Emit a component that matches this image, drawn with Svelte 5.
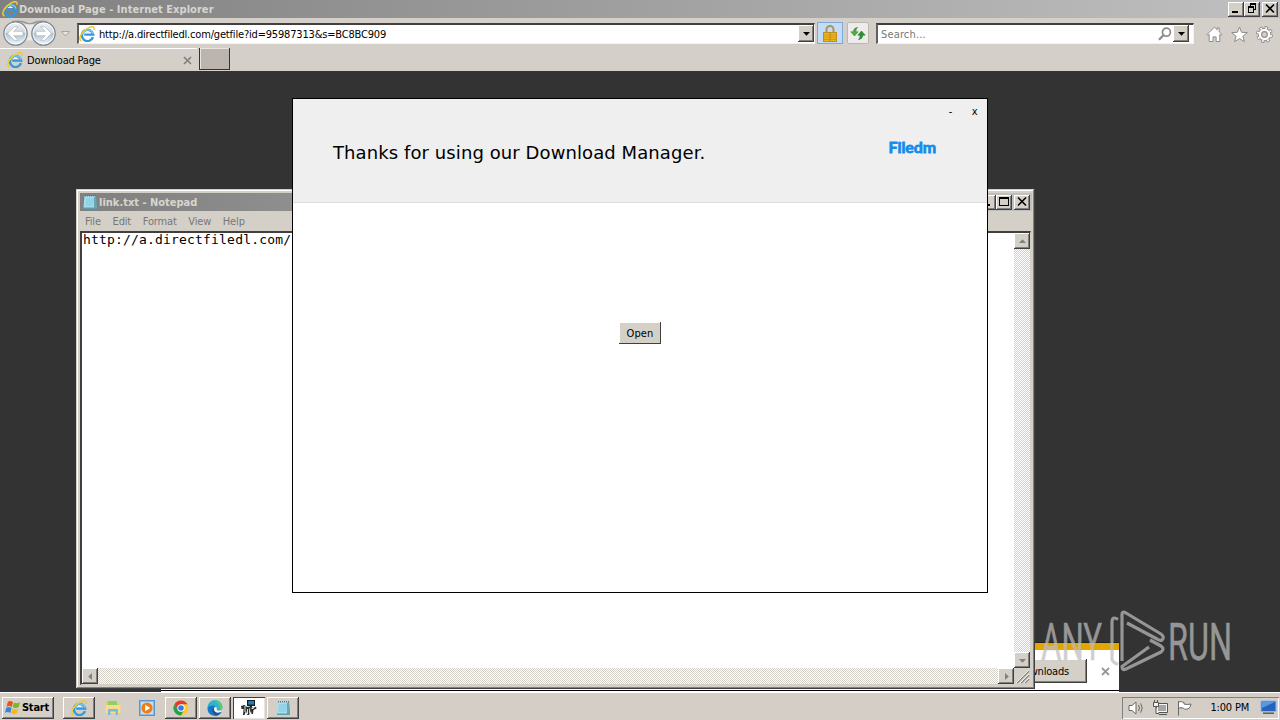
<script>
let address = $state('http://a.directfiledl.com/getfile?id=95987313&s=BC8BC909');
let query = $state('');
let note = $state('http://a.directfiledl.com/');

const menus = ['File', 'Edit', 'Format', 'View', 'Help'];
const tasks = [
	{ icon: 'ie', kind: 'running' },
	{ icon: 'folder', kind: 'pinned' },
	{ icon: 'player', kind: 'pinned' },
	{ icon: 'chrome', kind: 'running' },
	{ icon: 'edge', kind: 'running' },
	{ icon: 'setup', kind: 'active' },
	{ icon: 'notepad', kind: 'running' }
];
</script>

{#snippet arrow(dir, color = '#000')}
	<svg class="arrow" viewBox="0 0 7 7" width="7" height="7">
		{#if dir === 'down'}<path d="M0 2h7L3.5 5.8z" fill={color} />{/if}
		{#if dir === 'up'}<path d="M0 5h7L3.5 1.2z" fill={color} />{/if}
		{#if dir === 'left'}<path d="M5 0v7L1.2 3.5z" fill={color} />{/if}
		{#if dir === 'right'}<path d="M2 0v7L5.8 3.5z" fill={color} />{/if}
	</svg>
{/snippet}

{#snippet icon(name, size)}
	<svg class="icon" width={size} height={size} viewBox="0 0 16 16">
		{#if name === 'ie'}
			<path d="M14 11.2A5.7 5.6 0 1 1 14.2 8.6H5.2" fill="none" stroke="#3299dc" stroke-width="2.4" />
			<path d="M3.1 8A5.6 5.2 0 0 1 14 7.6" fill="none" stroke="#7acdf6" stroke-width="1.3" />
			<path d="M5.6 7q2.8-3.4 5.6 0z" fill="#e8f5fb" />
			<path d="M2.6 14.9C-1 14.2 1.2 7.8 6.4 3.8S15.8-.5 14.9 3.8" fill="none" stroke="#f0cb2c" stroke-width="1.5" />
		{:else if name === 'folder'}
			<path d="M1 2h5l1 1.500h7V12H1z" fill="#e9c95e" />
			<path d="M3 1h9v4H3z" fill="#8fcf6a" />
			<path d="M.5 5h15v8H.5z" fill="#f5dd8a" />
			<path d="M3 15V10q0-1 1-1h8q1 0 1 1v5h-2.400v-3.600H5.400V15z" fill="#7db9dc" />
		{:else if name === 'player'}
			<rect x=".5" y=".5" width="15" height="15" fill="#8bbbe5" stroke="#5996cf" />
			<path d="M2 2h12v12H2z" fill="#c4dff5" />
			<circle cx="8" cy="8" r="5.6" fill="#ee7d12" />
			<path d="M6.2 4.8v6.4L11.2 8z" fill="#fff" />
		{:else if name === 'chrome'}
			<circle cx="8" cy="8" r="7.5" fill="#fcc934" />
			<path d="M8 4.3h6.5A7.5 7.5 0 0 0 1.5 4.25L5 10z" fill="#e33b2e" />
			<path d="M1.5 4.25A7.5 7.5 0 0 0 8 15.5L11 10 8 11.5 5 10z" fill="#25a04b" />
			<circle cx="8" cy="8" r="3.7" fill="#fff" />
			<circle cx="8" cy="8" r="2.8" fill="#3779e5" />
		{:else if name === 'edge'}
			<path d="M.5 8A7.5 7.5 0 0 1 15.5 7c.2 4-4.5 4.5-6 3 1-1 .7-3-1.5-3.6C4.6 5.3 2 6 .5 8z" fill="#2bb5d2" />
			<path d="M7 .6A7.5 7.5 0 0 1 15.5 7c0 2-1.5 3.2-3.2 3.4C14 6 11 3 7 .6z" fill="#5ccb62" />
			<path d="M.5 8C2.2 4.8 7.6 5 8.8 7 6 7.4 5.7 11 8.5 12.4c2 1 4.2.7 6-.3A7.5 7.5 0 0 1 .5 8z" fill="#1977c9" />
			<path d="M5.3 8.4C4.6 12 7 15 10 15.2c2-.5 3.6-1.6 4.5-3.1-4 1.8-7.8.2-7.2-3.7z" fill="#155799" />
			<path d="M8.9 7.2Q10 8.5 9.4 10q1.2 1.3 5 .5l-.5 1.2q-3.6 1.3-5.6-.2-2-2-.7-4z" fill="#eef5f5" />
		{:else if name === 'setup'}
			<path d="M6 0h8v6H6z" fill="#161c22" />
			<path d="M7.2 1H13v3.6H7.2z" fill="#1682c5" />
			<path d="M9 6h2v1.5H9z" fill="#222" />
			<path d="M0 6l3.5-1L6 7l3-.5L12.5 8 15 6.5l.5 2-3 1.5-.5 4h-1.5l-.5-3-2 4H6.4L5 11l-1.5 4H2l.5-6H.5z" fill="#29302f" />
			<path d="M4 6v6M6.5 9v5M8.6 8.5v5M10.5 8.5h2" stroke="#dce5e7" fill="none" />
		{:else if name === 'notepad'}
			<path d="M3 2h11l1 13H2z" fill="#5e9dab" />
			<path d="M2.5 2h11v11.5h-12z" fill="#a4dff0" />
			<path d="M4 5h8M4 7h8M3.5 9h8M3.3 11h8" stroke="#74bdd4" stroke-width=".7" />
			<path d="M12 3l2-.5 1 12-3-.5z" fill="#6ba5b2" />
			<path d="M3 1.7h11" stroke="#557d89" stroke-width="1.6" stroke-dasharray="1 1" />
		{/if}
	</svg>
{/snippet}

{#snippet caption(kind)}
	<button class="cap raised" aria-label={kind}>
		<svg width="12" height="11" viewBox="0 0 12 11" fill="none" stroke="#000" shape-rendering="crispEdges">
			{#if kind === 'minimize'}<path d="M2 9h6" stroke-width="2" />{/if}
			{#if kind === 'maximize'}<path d="M1.5 1.5h9v8h-9z" /><path d="M1 2h10" stroke-width="2" />{/if}
			{#if kind === 'restore'}<path d="M4.5 3V1.5h5v5H8M2.5 4.5h5v5h-5z" /><path d="M4 1h6M2 4h6" stroke-width="2" />{/if}
			{#if kind === 'close'}<path d="M2 1.5l8 8M10 1.5l-8 8" stroke-width="1.6" shape-rendering="auto" />{/if}
		</svg>
	</button>
{/snippet}

<div class="desktop">
	<div class="browser">
		<header class="titlebar">
			{@render icon('ie', 16)}
			<span class="title">Download Page - Internet Explorer</span>
			<div class="caps">
				{@render caption('minimize')}
				{@render caption('restore')}
				{@render caption('close')}
			</div>
		</header>

		<nav class="navbar">
			<svg class="history" width="73" height="28" viewBox="0 0 73 28">
				<defs>
					<linearGradient id="orb" x2="0" y2="1">
						<stop offset="0" stop-color="#f0f1f4" /><stop offset=".45" stop-color="#d5dbe1" />
						<stop offset=".5" stop-color="#b3c0cb" /><stop offset="1" stop-color="#eefaff" />
					</linearGradient>
				</defs>
				<path d="M12 2.8q9-1.6 16 1.8 2 .8 4 0 7-3.4 15-1.6" fill="none" stroke="#96989a" stroke-width="1.6" />
				<path d="M24 5.4h10v16H24z" fill="#eceae8" />
				{#each [15.5, 43.5] as cx}
					<circle {cx} cy="14.5" r="11.7" fill="url(#orb)" stroke="#7b8792" stroke-width="1.2" />
					<circle {cx} cy="14.5" r="10.4" fill="none" stroke="#fff" opacity=".7" />
				{/each}
				<path d="M7.5 14.5l7-6.8h3.8l-4.6 4.6H23v4.4h-9.3l4.6 4.6h-3.8z" fill="#fff" stroke="#a3afba" stroke-width=".6" />
				<path d="M51.5 14.5l-7-6.8h-3.8l4.6 4.6H36v4.4h9.3l-4.6 4.6h3.8z" fill="#fff" stroke="#a3afba" stroke-width=".6" />
				<path d="M61.5 12.5h8l-4 4.5z" fill="#e8e4df" stroke="#aaa59f" />
			</svg>
			<div class="field address">
				{@render icon('ie', 16)}
				<input class="url" aria-label="Address" bind:value={address} />
				<button class="drop raised" aria-label="Show address list">{@render arrow('down')}</button>
			</div>
			<button class="lock" aria-label="Security report">
				<svg width="14" height="17" viewBox="0 0 14 17">
					<path d="M3.5 8V4.5a3.5 3.5 0 0 1 7 0V8" fill="none" stroke="#a9955a" stroke-width="2" />
					<rect x=".5" y="7.5" width="13" height="9" fill="#efb51f" stroke="#c08d20" />
					<path d="M1 10h12M1 12.3h12M1 14.5h12" stroke="#d39a1a" />
					<path d="M7 8v8" stroke="#b98518" />
				</svg>
			</button>
			<button class="refresh" aria-label="Refresh">
				<svg width="16" height="15" viewBox="0 0 16 15">
					<path d="M4.5 10L.8 5.8h2.4Q3.5 2 7.5 1.3 5.8 3 5.9 5.8h2.3z" fill="#4aac43" stroke="#268027" stroke-width=".5" />
					<path d="M11.5 5l3.7 4.2h-2.4Q12.5 13 8.5 13.7q1.7-1.7 1.6-4.5H7.8z" fill="#289331" stroke="#197020" stroke-width=".5" />
				</svg>
			</button>
			<div class="field search">
				<input aria-label="Search" placeholder="Search..." bind:value={query} />
				<svg width="14" height="14" viewBox="0 0 14 14" fill="none" stroke="#8b8b8b">
					<circle cx="8.4" cy="5.2" r="4" stroke-width="1.7" /><path d="M5.4 8.3L1 12.7" stroke-width="2.3" />
				</svg>
				<button class="drop raised" aria-label="Search options">{@render arrow('down')}</button>
				<i></i>
			</div>
			<div class="tools">
				<svg width="17" height="17" viewBox="0 0 17 17" fill="#fff" stroke="#8f8c88">
					<path d="M.9 8.6l7.6-7.4 2.7 2.6V1.9h2v3.9l2.9 2.8-1 1-1.3-1.2v7.1h-3.7v-4.6H7v4.6H3.2V8.4L1.9 9.6z" />
				</svg>
				<svg width="17" height="17" viewBox="0 0 17 17" fill="#fff" stroke="#8f8c88">
					<path d="M8.5 1l2.1 5.3 5.7.3-4.4 3.6 1.5 5.5-4.9-3.1-4.9 3.1 1.5-5.5L.7 6.6l5.7-.3z" />
				</svg>
				<svg width="17" height="17" viewBox="0 0 17 17" fill="none">
					<circle cx="8.5" cy="8.5" r="6.7" stroke="#8f8c88" stroke-width="3.4" stroke-dasharray="3.2 2.06" />
					<circle cx="8.5" cy="8.5" r="4.5" stroke="#8f8c88" stroke-width="4.4" />
					<circle cx="8.5" cy="8.5" r="6.7" stroke="#fff" stroke-width="1.8" stroke-dasharray="1.8 3.46" stroke-dashoffset="-.7" />
					<circle cx="8.5" cy="8.5" r="4.6" stroke="#fff" stroke-width="2.4" />
				</svg>
			</div>
		</nav>

		<div class="tabs">
			<div class="tab">
				{@render icon('ie', 16)}
				<span class="tabname">Download Page</span>
				<svg width="9" height="9" viewBox="0 0 9 9"><path d="M1 1l7 7M8 1L1 8" stroke="#85807c" stroke-width="1.7" /></svg>
			</div>
			<button class="newtab" aria-label="New tab"></button>
		</div>
		<main class="page"></main>
	</div>

	<div class="notice">
		<div class="stripe"></div>
		<div class="noticebody">
			<button class="raised">View downloads</button>
			<svg width="9" height="9" viewBox="0 0 9 9"><path d="M1 1l7 7M8 1L1 8" stroke="#999" stroke-width="1.8" /></svg>
		</div>
	</div>

	<section class="notepad">
		<header class="titlebar">
			{@render icon('notepad', 16)}
			<span class="title">link.txt - Notepad</span>
			<div class="caps">
				{@render caption('minimize')}
				{@render caption('maximize')}
				{@render caption('close')}
			</div>
		</header>
		<div class="menubar">
			{#each menus as item}<span>{item}</span>{/each}
		</div>
		<div class="editor">
			<textarea aria-label="Text" spellcheck="false" bind:value={note}></textarea>
			<div class="scroll vertical">
				<button class="raised">{@render arrow('up', '#808080')}</button>
				<button class="raised">{@render arrow('down', '#808080')}</button>
			</div>
			<div class="scroll">
				<button class="raised">{@render arrow('left', '#808080')}</button>
				<button class="raised">{@render arrow('right', '#808080')}</button>
			</div>
			<svg class="grip" width="16" height="16" viewBox="0 0 16 16">
				<path d="M3 15L15 3M7 15l8-8M11 15l4-4" stroke="#858079" stroke-width="1.5" />
				<path d="M2 15L15 2M6 15l9-9M10 15l5-5" stroke="#fff" stroke-width=".8" />
			</svg>
		</div>
	</section>

	<section class="manager">
		<header>
			<div class="controls"><button>-</button><button>x</button></div>
			<div class="banner">
				<h1>Thanks for using our Download Manager.</h1>
				<strong>Filedm</strong>
			</div>
		</header>
		<div class="content"><button class="raised">Open</button></div>
	</section>

	<svg class="watermark" width="200" height="66" viewBox="0 0 200 66">
		<g fill="#bdbdbd" stroke="#bdbdbd" stroke-width=".5">
			<text x="1" y="51" textLength="61" lengthAdjust="spacingAndGlyphs">ANY</text>
			<text x="128" y="51" textLength="64" lengthAdjust="spacingAndGlyphs">RUN</text>
		</g>
		<g fill="none" stroke="#bdbdbd" stroke-width="3.2" stroke-linejoin="round">
			<path d="M78 10.5q-6-4-6 3V50q0 3 6 5.5" />
			<path d="M82 52V5q0-3 4-1l35 21q4 3 1 6-2 1-5-1L87 14" />
			<path d="M110 31l11 6q4 3 0 6L86 60q-4 2-4-2.5L109 38" />
		</g>
	</svg>

	<footer class="taskbar">
		<button class="start raised">
			<svg width="16" height="16" viewBox="0 0 15 15">
				<path d="M2.7 1.7Q5.3.2 7.5 2L6.4 6.6Q4 5 1.5 6.3z" fill="#e8531f" />
				<path d="M8.4 2.3q2.5 1.5 5.6-.1l-1.3 4.7q-3 1.4-5.4-.1z" fill="#78b72b" />
				<path d="M1.2 7.3q2.6-1.4 4.9.3L5 12.1Q2.5 10.6 0 12z" fill="#3387d4" />
				<path d="M7 8q2.5 1.4 5.3.1L11 12.7q-2.7 1.5-5.2-.2z" fill="#f3ba20" />
			</svg>
			Start
		</button>
		<div class="tasks">
			{#each tasks as task}
				<button class="task {task.kind}" class:raised={task.kind === 'running'} aria-label={task.icon}>
					{@render icon(task.icon, 16)}
				</button>
			{/each}
		</div>
		<div class="tray">
			<svg width="17" height="16" viewBox="0 0 17 16" fill="#fff" stroke="#696969">
				<path d="M1 5.5h3L8 2v12l-4-3.5H1z" /><path d="M10.5 5q2 3 0 6M12.7 3.3q3 4.7 0 9.4" fill="none" />
			</svg>
			<svg width="17" height="16" viewBox="0 0 17 16" fill="#f4f4f4" stroke="#555">
				<path d="M4.5 3.5h11v9h-11z" /><path d="M6 5h8v6H6z" fill="#a5a5a5" stroke="none" />
				<path d="M7 14.5h8M1.5 2.5h5v4h-5zM2.5 0v2.5M5.5 0v2.5M4 7v6.5h3" />
			</svg>
			<svg width="17" height="16" viewBox="0 0 17 16" fill="#fff" stroke="#696969">
				<path d="M2.5 1v14.5M2.5 2q3-1 5.5.5V4q3 1 7 0-1 5-4.5 5.2-2.5.1-3-1-2.5-1-5 0z" />
			</svg>
			<time>1:00 PM</time>
			<svg width="17" height="15" viewBox="0 0 17 15">
				<path d="M1 1h15v10.5H1z" fill="#2464bd" stroke="#8fb7e4" /><path d="M1.5 1.5h14L2 8z" fill="#5a9ae0" /><path d="M3 13.2h11" stroke="#555d66" stroke-width="1.5" />
			</svg>
		</div>
	</footer>
</div>

<style>
	:global(body) { margin: 0; overflow: hidden; }
	.desktop { position: relative; display: flex; flex-direction: column; width: 1280px; height: 720px; background: #333; font: 11px "DejaVu Sans Condensed", "DejaVu Sans", sans-serif; font-stretch: condensed; letter-spacing: -0.2px; color: #000; overflow: hidden; }
	.desktop * { box-sizing: border-box; }
	svg { display: block; flex: none; }
	button { display: flex; align-items: center; justify-content: center; padding: 0; border: 0; background: #d4d0c8; font: inherit; letter-spacing: inherit; color: #000; }
	input, textarea { min-width: 0; border: 0; padding: 0; outline: 0; background: none; font: inherit; letter-spacing: inherit; color: #000; }
	.raised { background: #d4d0c8; box-shadow: inset -1px -1px #404040, inset 1px 1px #fff, inset -2px -2px #808080; }
	.browser { display: flex; flex-direction: column; flex: 1; min-height: 0; background: #d5cfc9; }
	.titlebar { display: flex; align-items: center; height: 18px; padding: 0 2px; background: linear-gradient(90deg, #808080, #c0c0c0); font-weight: bold; color: #d8d5cf; }
	.title { margin-left: 1px; white-space: nowrap; letter-spacing: 0.05px; }
	.caps { display: flex; margin-left: auto; }
	.cap { width: 16px; height: 15px; padding: 0 1px 1px 0; }
	.cap:last-child { margin-left: 2px; }

	.navbar { display: flex; align-items: center; height: 30px; padding: 0 7px 0 0; }
	.history { margin-right: 4px; }
	.field { display: flex; align-items: center; height: 21px; background: #fff; border: solid; border-width: 2px 1px 1px 2px; border-color: #404040 #f4f2ee #f4f2ee #606060; }
	.address { width: 738px; }
	.url { flex: 1; margin-left: 4px; padding-top: 1px; letter-spacing: -0.18px; }
	.drop { width: 16px; height: 17px; }
	.lock { width: 26px; height: 22px; margin-left: 2px; background: #c5dcf7; border: 1px solid #7da9dc; }
	.refresh { width: 22px; height: 22px; margin-left: 4px; background: #eeecea; border: 1px solid #bcb7b1; border-radius: 2px; }
	.search { width: 318px; margin-left: 7px; padding-left: 3px; }
	.search input { flex: 1; padding-top: 1px; }
	.search input::placeholder { color: #777; opacity: 1; letter-spacing: 0.15px; }
	.search .drop { margin-left: 1px; }
	.search i { width: 4px; }
	.tools { display: flex; gap: 8px; margin: 3px 0 0 auto; }

	.tabs { display: flex; height: 23px; gap: 2px; }
	.tab { display: flex; align-items: center; width: 197px; padding: 0 5px 0 7px; border-top: 1px solid #fff; }
	.tabname { flex: 1; margin-left: 4px; }
	.newtab { width: 31px; height: 22px; background: #bcb4ae; border: solid #333; border-width: 0 1px 1px; box-shadow: inset 1px 1px #e8e4e0; }
	.page { flex: 1; background: #333; }

	.notice { position: absolute; left: 161px; top: 642px; width: 958px; height: 50px; background: #fff; border-top: 1px solid #222; box-shadow: inset 0 -1px #fff, inset 0 -2px #000; }
	.stripe { height: 7px; background: #e3a600; }
	.noticebody { display: flex; align-items: center; justify-content: flex-end; gap: 14px; height: 42px; padding: 0 9px 0 0; }
	.noticebody button { width: 106px; height: 24px; justify-content: flex-end; padding-right: 18px; }

	.notepad { position: absolute; left: 76px; top: 189px; display: flex; flex-direction: column; width: 959px; height: 500px; padding: 4px 3px 4px 4px; background: #d4d0c8; box-shadow: inset -1px -1px #404040, inset 1px 1px #d4d0c8, inset -2px -2px #808080, inset 2px 2px #fff; }
	.notepad .titlebar { flex: none; }
	.notepad .title { letter-spacing: 0; }
	.menubar { display: flex; align-items: center; gap: 11.7px; height: 20px; padding-left: 5px; color: #777; letter-spacing: -0.16px; }
	.editor { display: grid; grid-template: 1fr 16px / 1fr 16px; flex: 1; margin-right: 1px; border: 1px solid #808080; border-width: 2px 1px 1px 2px; border-color: #404040 #d4d0c8 #d4d0c8 #404040; background: #d4d0c8; }
	textarea { resize: none; background: #fff; padding: 0 1px; font: 13px/14px "DejaVu Sans Mono", monospace; letter-spacing: 0.18px; overflow: hidden; }
	.scroll { display: flex; justify-content: space-between; background: repeating-conic-gradient(#fff 0 25%, #d4d0c8 0 50%) 0 0 / 2px 2px; }
	.vertical { flex-direction: column; }
	.scroll button { width: 16px; height: 16px; }

	.manager { position: absolute; left: 292px; top: 98px; width: 696px; height: 495px; display: flex; flex-direction: column; background: #fff; border: 1px solid #000; }
	.manager header { height: 104px; background: #efefef; border-bottom: 1px solid #ddd; }
	.controls { display: flex; justify-content: flex-end; height: 25px; }
	.controls button { width: 24px; padding-right: 1px; background: none; }
	.banner { display: flex; justify-content: space-between; padding: 15px 51px 0 40px; }
	h1 { margin: 0; font: 18px/28px "DejaVu Sans", sans-serif; letter-spacing: 0.09px; white-space: nowrap; }
	strong { font: bold 16px/16px Lato, sans-serif; letter-spacing: -0.1px; color: #138cea; -webkit-text-stroke: 0.8px #138cea; }
	.content { display: flex; justify-content: center; padding-top: 119px; }
	.content button { width: 42px; height: 22px; box-shadow: inset -1px -1px #404040, inset 1px 1px #fff; letter-spacing: 0.1px; }

	.watermark { position: absolute; left: 1040px; top: 609px; opacity: 0.72; font: 400 52px Roboto, sans-serif; letter-spacing: 0; overflow: visible; }

	.taskbar { display: flex; align-items: center; height: 28px; padding: 2px 1px 0 2px; background: #d4cec7; border-top: 1px solid #fff; position: relative; }
	.start { gap: 1px; width: 52px; height: 22px; font-weight: bold; padding-right: 2px; }
	.tasks { display: flex; gap: 2px; margin-left: 9px; }
	.task { width: 32px; height: 22px; background: transparent; }
	.task.raised { background: #d4cec7; }
	.task.active { background: #fff; box-shadow: inset 1px 1px #404040, inset -1px -1px #e8e4df; }
	.tray { display: flex; align-items: center; gap: 7px; height: 22px; margin-left: auto; width: 157px; padding: 0 2px 0 6px; box-shadow: inset 1px 1px #808080, inset -1px -1px #fff; }
	time { margin-left: auto; margin-right: 4px; white-space: nowrap; }
</style>
